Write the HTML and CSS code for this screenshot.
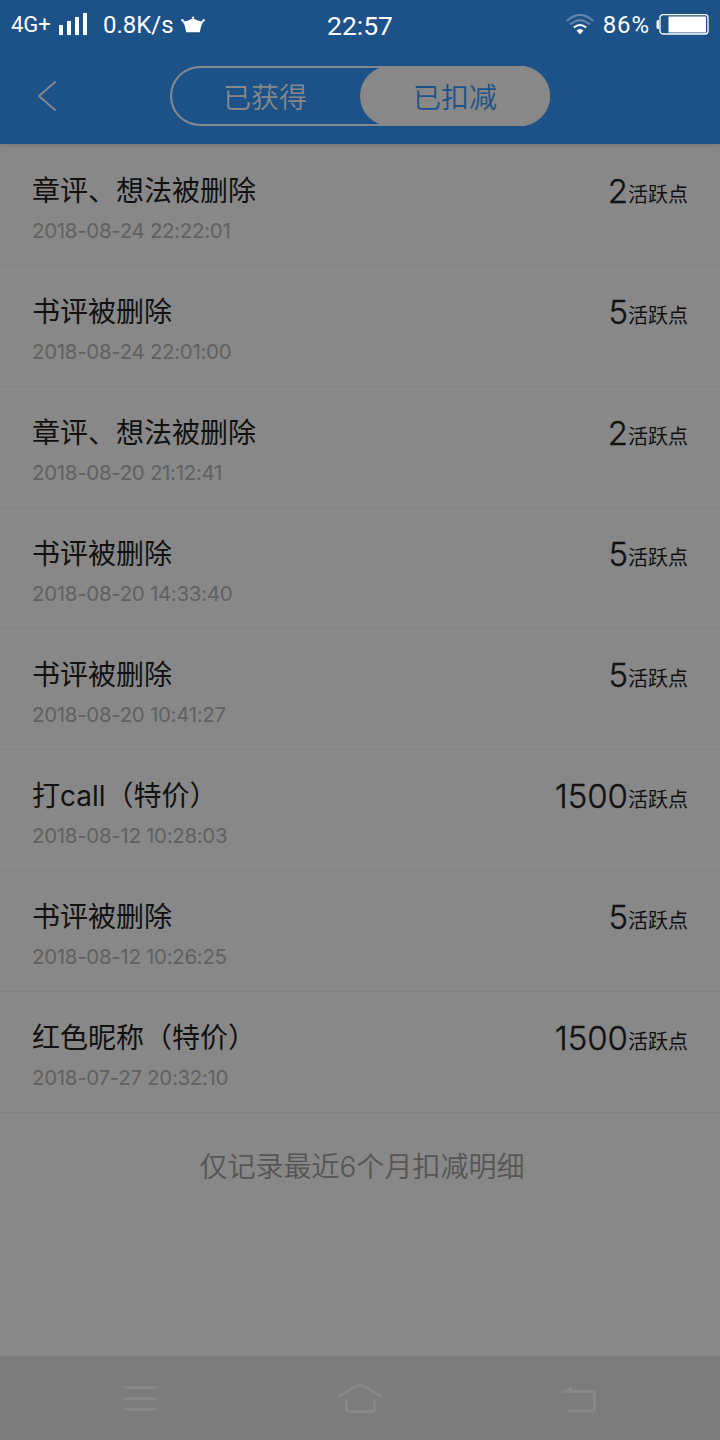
FILE: index.html
```
<!DOCTYPE html>
<html lang="zh-CN">
<head>
<meta charset="utf-8">
<title>已扣减</title>
<link rel="stylesheet" href="styles.css">
</head>
<body>
<div class="screen">
  <header class="top">
    <div class="status">
      <div class="status-left">
        <span class="network">4G+</span>
        <svg class="signal" width="29" height="22" viewBox="0 0 29 22" fill="#fff"><path d="M0 12h4v10H0zM8 8h4v14H8zM16 4h4v18h-4zM24 0h4v22h-4z"/></svg>
        <span class="speed">0.8K/s</span>
        <svg class="crown" width="24" height="17" viewBox="0 0 24 17" fill="#fff"><path d="M1 4.500Q5 6 8.500 4L11.500 2.500h1l3 1.500Q19 6 23 4.500L20.500 9 18.700 16.200H5.300L3.500 9z"/><circle cx="1.400" cy="4.200" r="1.200"/><circle cx="12" cy="1.600" r="1.200"/><circle cx="22.600" cy="4.200" r="1.200"/></svg>
      </div>
      <div class="clock">22:57</div>
      <div class="status-right">
        <svg class="wifi" width="28" height="21" viewBox="0 0 28 21" fill="none" stroke="#fff" stroke-width="2"><path opacity=".32" d="M.7 7Q14-5 27.300 7"/><path opacity=".32" d="M4.300 10.500Q14 2 23.700 10.500"/><path d="M7.800 13.500Q14 8.500 20.200 13.500"/><path fill="#fff" stroke="none" d="M10.500 16.500Q14 13.500 17.500 16.500L14 20.500z"/></svg>
        <span class="percent">86%</span>
        <svg class="battery" width="53" height="21" viewBox="0 0 53 21"><path fill="#fff" d="M3 6v9H2Q.5 15 .5 13V8Q.5 6 2 6z"/><rect x="4" y=".7" width="48" height="19.300" rx="3" fill="none" stroke="#fff" stroke-width="1.300"/><path fill="#fff" d="M12.500 2.500H50v16H12.500z"/></svg>
      </div>
    </div>
    <nav class="nav">
      <svg class="back" width="20" height="30" viewBox="0 0 20 30" fill="none" stroke="#82898f" stroke-width="2" stroke-linecap="round" stroke-linejoin="round"><path d="M18 1 2 15l16 14"/></svg>
      <div class="tabs"><span class="tab">已获得</span><span class="tab active">已扣减</span></div>
    </nav>
  </header>
  <main class="list">
    <div class="row"><div><div class="name">章评、想法被删除</div><div class="date">2018-08-24 22:22:01</div></div><div class="points"><b>2</b><span>活跃点</span></div></div>
    <div class="row"><div><div class="name">书评被删除</div><div class="date">2018-08-24 22:01:00</div></div><div class="points"><b>5</b><span>活跃点</span></div></div>
    <div class="row"><div><div class="name">章评、想法被删除</div><div class="date">2018-08-20 21:12:41</div></div><div class="points"><b>2</b><span>活跃点</span></div></div>
    <div class="row"><div><div class="name">书评被删除</div><div class="date">2018-08-20 14:33:40</div></div><div class="points"><b>5</b><span>活跃点</span></div></div>
    <div class="row"><div><div class="name">书评被删除</div><div class="date">2018-08-20 10:41:27</div></div><div class="points"><b>5</b><span>活跃点</span></div></div>
    <div class="row"><div><div class="name">打call（特价）</div><div class="date">2018-08-12 10:28:03</div></div><div class="points"><b>1500</b><span>活跃点</span></div></div>
    <div class="row"><div><div class="name">书评被删除</div><div class="date">2018-08-12 10:26:25</div></div><div class="points"><b>5</b><span>活跃点</span></div></div>
    <div class="row"><div><div class="name">红色昵称（特价）</div><div class="date">2018-07-27 20:32:10</div></div><div class="points"><b>1500</b><span>活跃点</span></div></div>
    <p class="note">仅记录最近6个月扣减明细</p>
  </main>
  <footer class="keys">
    <svg width="34" height="30" viewBox="0 0 34 30"><path d="M1.500 4.500h30M1.500 15.500h30M1.500 26.500h30"/></svg>
    <svg width="48" height="32" viewBox="0 0 48 32"><path d="M2.500 14.500 19 5q5-3 10 0l16.500 9.500M10.500 19.500v7.500q0 2.500 2.500 2.500h23q2.500 0 2.500-2.500v-7.500"/></svg>
    <svg width="36" height="30" viewBox="0 0 36 30"><path d="M2.500 8.500h27.500q2.500 0 2.500 2.500v14.500q0 2.500-2.500 2.500H6.500"/><path class="arrow" d="M.5 9 9.500 3.500V9z"/></svg>
  </footer>
</div>
</body>
</html>
```
FILE: styles.css
```
* { box-sizing: border-box; }
body { margin: 0; }
svg { display: block; flex: none; }
.screen {
  width: 720px; height: 1440px; display: flex; flex-direction: column;
  background: #888; color: #111; overflow: hidden;
  font-family: Inter, "Noto Sans CJK SC", sans-serif;
  font-weight: 400;
}
.top { height: 144px; background: #1d5288; flex: none; box-shadow: 0 1px 4px rgba(0, 0, 0, .15); }
.status {
  height: 48px; display: grid; grid-template: 48px / 1fr auto 1fr;
  color: #fff; font-family: Roboto, sans-serif; line-height: 48px; white-space: nowrap;
}
.status-left, .status-right { display: flex; align-items: center; }
.status-left { padding-left: 11px; }
.status-right { justify-content: flex-end; padding-right: 11px; }
.network { width: 48px; font-size: 22px; padding-top: 2px; }
.signal { margin-right: 15px; }
.speed { width: 78px; font-size: 24px; padding-top: 2px; }
.clock { font-size: 26.5px; line-height: 51px; }
.percent { font-size: 24px; letter-spacing: .9px; margin: 2px 6px 0 9px; }
.nav { height: 96px; display: flex; align-items: center; padding-left: 37px; }
.tabs {
  width: 380px; height: 60px; margin-left: 113px; display: flex;
  border-radius: 30px; box-shadow: inset 0 0 0 2px #82898f;
}
.tab { flex: 1; color: #888; font-size: 28px; font-weight: 350; line-height: 65px; text-align: center; border-radius: 30px; }
.tab.active { background: #888; color: #1d5288; }
.list { flex: 1; padding-top: 1px; }
.row {
  height: 121px; padding: 25px 32px 0; display: flex; justify-content: space-between;
  border-bottom: 1px solid #818181;
}
.name { font-size: 28px; line-height: 42px; }
.date { font-size: 20.5px; letter-spacing: -.32px; line-height: 26px; color: #616161; margin-top: 6px; }
.points { font-size: 20px; line-height: 42px; }
.points b { font-size: 33px; font-weight: 300; -webkit-text-stroke: .35px #111; }
.points span { vertical-align: 1px; }
.note { margin: 33px 0 0 4px; text-align: center; font-size: 28px; font-weight: 350; line-height: 42px; color: #555; }
.keys { height: 84px; background: #7c7c7c; display: flex; justify-content: space-between; align-items: center; padding: 0 122px 0 124px; }
.keys path { fill: none; stroke: #888; stroke-width: 3; stroke-linecap: round; stroke-linejoin: round; }
.keys .arrow { fill: #888; stroke-width: 1; }
```
